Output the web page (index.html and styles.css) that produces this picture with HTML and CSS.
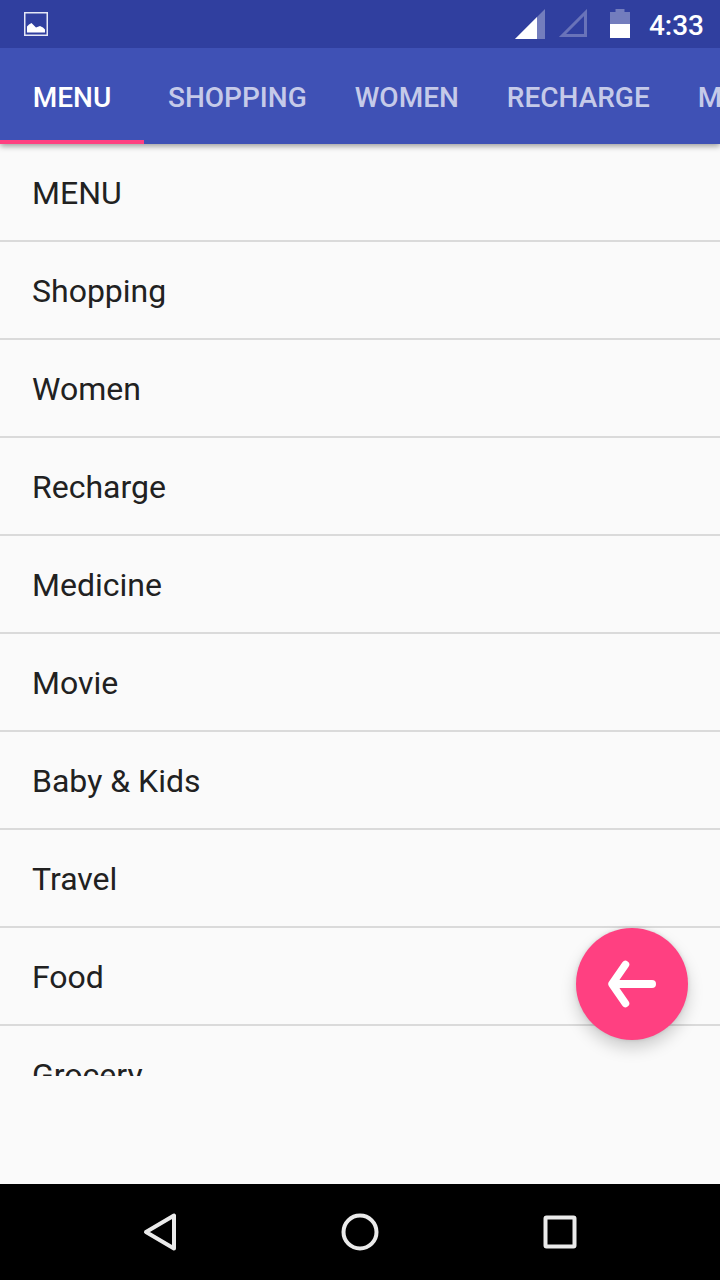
FILE: index.html
```html
<!DOCTYPE html>
<html lang="en">
<head>
  <meta charset="utf-8">
  <meta name="viewport" content="width=device-width, initial-scale=1">
  <title>Menu</title>
  <link rel="stylesheet" href="styles.css">
</head>
<body>
  <div class="screen">
    <div class="status-bar">
      <svg class="status-picture" viewBox="0 0 24 24" width="24" height="24" aria-hidden="true">
        <rect x="0.75" y="0.75" width="22.5" height="22.5" fill="none" stroke="#e4e7f6" stroke-width="1.5"/>
        <path d="M3 20.500V14.500L5 12.500L7.500 11L12 15.500L16 14L19 15.500L21 17.500V20.500Z" fill="#fff"/>
      </svg>
      <div class="status-icons">
        <svg class="signal" viewBox="0 0 30 30" width="30" height="30" aria-hidden="true">
          <path d="M30 0V30H0Z" fill="#737dbd"/>
          <path d="M22 8V30H0Z" fill="#fff"/>
        </svg>
        <svg class="signal-empty" viewBox="0 0 30 30" width="30" height="30" aria-hidden="true">
          <path d="M27.500 3.500V26.500H4.500Z" fill="none" stroke="#6973b9" stroke-width="3"/>
        </svg>
        <svg class="battery" viewBox="0 0 20 30" width="20" height="30" aria-hidden="true">
          <path d="M5.500 0H14.500V3H20V15H0V3H5.500Z" fill="#737dbd"/>
          <path d="M0 15H20V29H0Z" fill="#fff"/>
        </svg>
        <time class="clock">4:33</time>
      </div>
    </div>

    <nav class="tabs" role="tablist" aria-label="Categories">
      <button class="tab tab-active" type="button" role="tab" aria-selected="true">MENU</button>
      <button class="tab" type="button" role="tab" aria-selected="false">SHOPPING</button>
      <button class="tab" type="button" role="tab" aria-selected="false">WOMEN</button>
      <button class="tab" type="button" role="tab" aria-selected="false">RECHARGE</button>
      <button class="tab" type="button" role="tab" aria-selected="false">MEDICINE</button>
    </nav>

    <main class="content">
      <ul class="list">
        <li class="list-item">MENU</li>
        <li class="list-item">Shopping</li>
        <li class="list-item">Women</li>
        <li class="list-item">Recharge</li>
        <li class="list-item">Medicine</li>
        <li class="list-item">Movie</li>
        <li class="list-item">Baby &amp; Kids</li>
        <li class="list-item">Travel</li>
        <li class="list-item">Food</li>
        <li class="list-item">Grocery</li>
      </ul>
      <button class="fab" type="button" aria-label="Back">
        <svg viewBox="0 0 48 48" width="48" height="48" aria-hidden="true">
          <path d="M6 24H44" fill="none" stroke="#fff" stroke-width="8" stroke-linecap="round"/>
          <path d="M17.500 4.500L4 24L17.500 43.500" fill="none" stroke="#fff" stroke-width="7.500" stroke-linecap="round" stroke-linejoin="round"/>
        </svg>
      </button>
    </main>

    <footer class="nav-bar">
      <button class="nav-button" type="button" aria-label="Back">
        <svg viewBox="0 0 40 40" width="40" height="40" aria-hidden="true">
          <path d="M34 3.500V36.500L6 20Z" fill="none" stroke="#ebebeb" stroke-width="4" stroke-linejoin="round"/>
        </svg>
      </button>
      <button class="nav-button" type="button" aria-label="Home">
        <svg viewBox="0 0 40 40" width="40" height="40" aria-hidden="true">
          <circle cx="20" cy="20" r="16.500" fill="none" stroke="#ebebeb" stroke-width="4"/>
        </svg>
      </button>
      <button class="nav-button" type="button" aria-label="Recent apps">
        <svg viewBox="0 0 40 40" width="40" height="40" aria-hidden="true">
          <rect x="5.500" y="5.500" width="29" height="29" rx="1" fill="none" stroke="#ebebeb" stroke-width="4"/>
        </svg>
      </button>
    </footer>
  </div>
</body>
</html>
```

FILE: styles.css
```css
* {
  box-sizing: border-box;
}

body {
  margin: 0;
  background: #fafafa;
  color: #212121;
  font-family: Roboto, "Noto Sans", sans-serif;
}

button {
  padding: 0;
  border: 0;
  background: none;
  color: inherit;
  font: inherit;
  cursor: pointer;
}

svg {
  display: block;
  flex: none;
}

.screen {
  display: flex;
  flex-direction: column;
  height: 100vh;
  overflow: hidden;
}

.status-bar {
  position: relative;
  z-index: 2;
  display: flex;
  flex: none;
  align-items: center;
  justify-content: space-between;
  height: 48px;
  padding: 0 16px 0 24px;
  background: #303f9f;
  color: #fff;
}

.status-icons {
  display: flex;
  align-items: center;
}

.signal-empty {
  margin-left: 13px;
}

.battery {
  margin-left: 22px;
}

.clock {
  margin-left: 19px;
  padding-top: 4px;
  font-size: 28px;
  font-weight: 500;
  line-height: 32px;
}

.tabs {
  position: relative;
  z-index: 1;
  display: flex;
  flex: none;
  height: 96px;
  overflow: hidden;
  background: #3f51b5;
  box-shadow: 0 2px 6px rgba(0, 0, 0, 0.4);
}

.tab {
  flex: none;
  min-width: 144px;
  padding: 8px 24px 0;
  border-bottom: 4px solid transparent;
  color: #c5cae9;
  font-size: 28px;
  font-weight: 500;
  line-height: 32px;
}

.tab-active {
  border-bottom-color: #ff4081;
  color: #fff;
}

.content {
  position: relative;
  display: flex;
  flex: 1;
  flex-direction: column;
  min-height: 0;
  padding-bottom: 108px;
}

.list {
  flex: 1;
  min-height: 0;
  margin: 0;
  padding: 0;
  overflow: hidden;
  list-style: none;
}

.list-item {
  padding: 29px 32px 27px;
  border-bottom: 2px solid #dadada;
  font-size: 32px;
  line-height: 40px;
}

.fab {
  position: absolute;
  right: 32px;
  bottom: 144px;
  display: flex;
  align-items: center;
  justify-content: center;
  width: 112px;
  height: 112px;
  border-radius: 50%;
  background: #ff4081;
  box-shadow: 0 8px 16px rgba(0, 0, 0, 0.18), 0 0 4px rgba(0, 0, 0, 0.12);
}

.nav-bar {
  display: flex;
  flex: none;
  height: 96px;
  padding: 0 60px;
  background: #000;
}

.nav-button {
  display: flex;
  flex: 1;
  align-items: center;
  justify-content: center;
}
```
